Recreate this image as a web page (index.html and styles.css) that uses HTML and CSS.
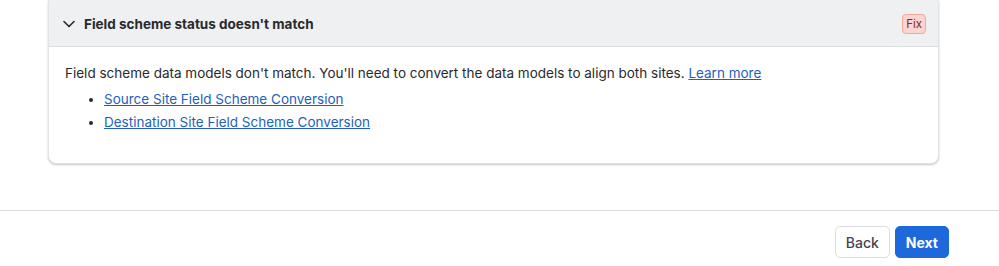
FILE: index.html
```html
<!DOCTYPE html>
<html>
<head>
<meta charset="utf-8">
<link rel="stylesheet" href="styles.css">
</head>
<body>
<div class="page">
  <div class="content">
    <section class="card">
      <header class="card-header">
        <svg class="chevron" width="12" height="8" viewBox="0 0 12 8"><path d="M1 1.5 L6 6.5 L11 1.5" fill="none" stroke="#292a2e" stroke-width="1.6" stroke-linecap="round" stroke-linejoin="round"/></svg>
        <h3 class="title">Field scheme status doesn't match</h3>
        <span class="badge">Fix</span>
      </header>
      <div class="card-body">
        <p class="desc">Field scheme data models don't match. You'll need to convert the data models to align both sites. <a href="#">Learn more</a></p>
        <ul class="links">
          <li><a href="#">Source Site Field Scheme Conversion</a></li>
          <li><a href="#">Destination Site Field Scheme Conversion</a></li>
        </ul>
      </div>
    </section>
  </div>
  <footer class="footer">
    <button class="btn btn-default">Back</button>
    <button class="btn btn-primary">Next</button>
  </footer>
</div>
</body>
</html>
```
FILE: styles.css
```css
* { box-sizing: border-box; }
html, body { margin: 0; padding: 0; background: #fff; }
body {
  font-family: Inter, "Noto Sans", sans-serif;
  font-size: 13.5px;
  color: #292a2e;
  overflow: hidden;
}
.page { width: 999px; height: 266px; }
.content {
  display: flow-root;
  padding: 0 60px 0 48px;
  height: 210px;
}
.card {
  margin-top: -4px;
  width: 891px;
  border: 1px solid #e2e3e5;
  border-radius: 8px;
  box-shadow: 0 1px 2px rgba(9, 30, 66, 0.25);
  overflow: hidden;
  background: #fff;
}
.card-header {
  display: flex;
  align-items: center;
  height: 50px;
  padding: 4px 12px 0 14px;
  background: #eff0f1;
  border-bottom: 1px solid #dcdde0;
}
.chevron { margin-right: 9px; flex: none; margin-top: 1px; }
.title {
  margin: 0;
  font-size: 13.5px;
  font-weight: 700;
  color: #292a2e;
  flex: 1;
}
.badge {
  font-size: 11.5px;
  line-height: 16px;
  padding: 1px 3px;
  border-radius: 4px;
  background: #fdd5d0;
  border: 1px solid #f2a79c;
  color: #7d2a23;
}
.card-body {
  padding: 16px 16px 29px 16px;
}
.desc { margin: 0; line-height: 20px; }
a { color: #1f5fbd; text-decoration: underline; }
.links {
  margin: 5px 0 0 0;
  padding-left: 39px;
  line-height: 23px;
}
.footer {
  border-top: 1px solid #dcdde0;
  display: flex;
  justify-content: flex-end;
  gap: 5px;
  padding: 15px 50px 0 0;
}
.btn {
  font-family: Inter, "Noto Sans", sans-serif;
  font-size: 14px;
  height: 32px;
  border-radius: 5px;
  padding: 0 10px;
  cursor: pointer;
}
.btn-default {
  background: #fff;
  border: 1px solid #dcdde0;
  color: #44454a;
  font-weight: 500;
}
.btn-primary {
  background: #1d68db;
  border: 1px solid #1d68db;
  color: #fff;
  font-weight: 700;
}
```
